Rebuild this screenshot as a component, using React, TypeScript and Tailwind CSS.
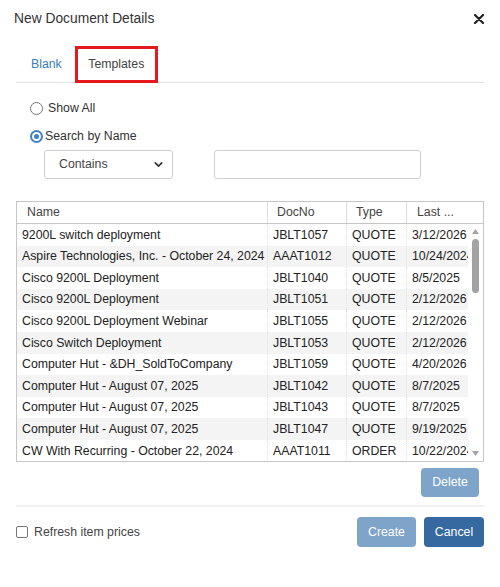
import { ChevronDown } from 'lucide-react';

const ROWS: { name: string; docNo: string; type: string; last: string }[] = [
  { name: '9200L switch deployment', docNo: 'JBLT1057', type: 'QUOTE', last: '3/12/2026' },
  { name: 'Aspire Technologies, Inc. - October 24, 2024', docNo: 'AAAT1012', type: 'QUOTE', last: '10/24/2024' },
  { name: 'Cisco 9200L Deployment', docNo: 'JBLT1040', type: 'QUOTE', last: '8/5/2025' },
  { name: 'Cisco 9200L Deployment', docNo: 'JBLT1051', type: 'QUOTE', last: '2/12/2026' },
  { name: 'Cisco 9200L Deployment Webinar', docNo: 'JBLT1055', type: 'QUOTE', last: '2/12/2026' },
  { name: 'Cisco Switch Deployment', docNo: 'JBLT1053', type: 'QUOTE', last: '2/12/2026' },
  { name: 'Computer Hut - &DH_SoldToCompany', docNo: 'JBLT1059', type: 'QUOTE', last: '4/20/2026' },
  { name: 'Computer Hut - August 07, 2025', docNo: 'JBLT1042', type: 'QUOTE', last: '8/7/2025' },
  { name: 'Computer Hut - August 07, 2025', docNo: 'JBLT1043', type: 'QUOTE', last: '8/7/2025' },
  { name: 'Computer Hut - August 07, 2025', docNo: 'JBLT1047', type: 'QUOTE', last: '9/19/2025' },
  { name: 'CW With Recurring - October 22, 2024', docNo: 'AAAT1011', type: 'ORDER', last: '10/22/2024' },
];

function Radio({ checked, label }: { checked?: boolean; label: string }) {
  return (
    <div className="flex items-center h-5">
      {checked ? (
        <span className="w-[13px] h-[13px] rounded-full bg-[#3f82c4] flex items-center justify-center">
          <span className="w-[9px] h-[9px] rounded-full border-2 border-white bg-[#3f82c4]" />
        </span>
      ) : (
        <span className="w-[13px] h-[13px] rounded-full border border-[#767676] bg-white" />
      )}
      <span className={`text-[12.3px] text-[#333] ${checked ? 'ml-[2px]' : 'ml-[5px]'}`}>{label}</span>
    </div>
  );
}

export default function App() {
  return (
    <div
      className="w-[500px] h-[587px] bg-white text-[#333] flex flex-col"
      style={{ fontFamily: '"Liberation Sans", Arial, sans-serif' }}
    >
      {/* header */}
      <div className="h-[38px] flex items-center justify-between pl-[14px] pr-[16px]">
        <span className="text-[13.8px] text-[#333]">New Document Details</span>
        <svg width="10" height="10" viewBox="0 0 10 10">
          <path d="M1 1 L9 9 M9 1 L1 9" stroke="#222" strokeWidth="2.2" strokeLinecap="round" />
        </svg>
      </div>

      {/* tabs */}
      <div className="mt-[8px] mx-[16px] h-[37px] flex items-stretch border-b border-[#e3e3e3]">
        <div className="pl-[15px] pr-[13px] flex items-center text-[12.3px] text-[#3a7dbf]">Blank</div>
        <div className="w-[83px] h-[37px] border-[3px] border-[#e4191f] flex items-center justify-center text-[12.3px] text-[#444] bg-white">
          Templates
        </div>
      </div>

      {/* filters */}
      <div className="pl-[30px] mt-[15px] flex flex-col gap-[8px]">
        <Radio label="Show All" />
        <Radio checked label="Search by Name" />
      </div>
      <div className="flex items-center mt-[4px] pl-[44px] gap-[41px]">
        <div className="w-[129px] h-[29px] border border-[#cfcfcf] rounded-[3px] flex items-center justify-between pl-[14px] pr-[7px] text-[12.3px] text-[#444]">
          <span>Contains</span>
          <ChevronDown size={13} strokeWidth={3} color="#333" />
        </div>
        <div className="w-[207px] h-[29px] border border-[#cfcfcf] rounded-[3px]" />
      </div>

      {/* table */}
      <div className="mt-[22px] mx-[16px] h-[261px] border border-[#c6c6c6] flex flex-col text-[12.3px] text-[#222]">
        <div className="h-[22px] grid grid-cols-[251px_79px_60px_1fr] border-b border-[#c6c6c6] text-[#444] shrink-0">
          <div className="pl-[10px] flex items-center border-r border-[#dcdcdc]">Name</div>
          <div className="pl-[9px] flex items-center border-r border-[#dcdcdc]">DocNo</div>
          <div className="pl-[9px] flex items-center border-r border-[#dcdcdc]">Type</div>
          <div className="pl-[10px] flex items-center">Last ...</div>
        </div>
        <div className="flex flex-1 min-h-0">
          <div className="flex-1 overflow-hidden">
            {ROWS.map((r, i) => (
              <div
                key={i}
                className={`h-[21.6px] grid grid-cols-[251px_79px_60px_1fr] ${i % 2 === 1 ? 'bg-[#f4f4f4]' : 'bg-white'}`}
              >
                <div className="pl-[5px] flex items-center whitespace-nowrap overflow-hidden border-r border-dotted border-[#e2e2e2]">
                  {r.name}
                </div>
                <div className="pl-[5px] flex items-center whitespace-nowrap overflow-hidden border-r border-dotted border-[#e2e2e2]">
                  {r.docNo}
                </div>
                <div className="pl-[5px] flex items-center whitespace-nowrap overflow-hidden border-r border-dotted border-[#e2e2e2]">
                  {r.type}
                </div>
                <div className="pl-[5px] flex items-center whitespace-nowrap overflow-hidden">{r.last}</div>
              </div>
            ))}
          </div>
          {/* scrollbar */}
          <div className="w-[15px] shrink-0 bg-white flex flex-col items-center py-[3px]">
            <svg width="7" height="5" viewBox="0 0 7 5" className="mt-[2px]">
              <path d="M3.5 0 L7 5 L0 5 Z" fill="#a3a3a3" />
            </svg>
            <div className="mt-[5px] w-[7px] h-[54px] rounded-full bg-[#a3a3a3]" />
            <div className="flex-1" />
            <svg width="7" height="5" viewBox="0 0 7 5" className="mb-[2px]">
              <path d="M0 0 L7 0 L3.5 5 Z" fill="#a3a3a3" />
            </svg>
          </div>
        </div>
      </div>

      <div className="mx-[16px] mt-[6px] flex justify-end pr-[5px]">
        <button className="h-[29px] w-[58px] rounded-[4px] bg-[#7fa4ca] text-white text-[12.3px]">Delete</button>
      </div>

      <div className="mx-[16px] mt-[8px] border-t-2 border-[#f1f1f1]" />

      <div className="mx-[16px] mt-[10px] flex items-center justify-between">
        <div className="flex items-center gap-[6px]">
          <span className="w-[12px] h-[12px] rounded-[2px] border border-[#767676] bg-white" />
          <span className="text-[12.3px] text-[#444]">Refresh item prices</span>
        </div>
        <div className="flex items-center gap-[8px]">
          <button className="h-[30px] w-[59px] rounded-[4px] bg-[#7fa4ca] text-white text-[12.3px]">Create</button>
          <button className="h-[30px] w-[60px] rounded-[4px] bg-[#35699f] text-white text-[12.3px]">Cancel</button>
        </div>
      </div>
    </div>
  );
}
